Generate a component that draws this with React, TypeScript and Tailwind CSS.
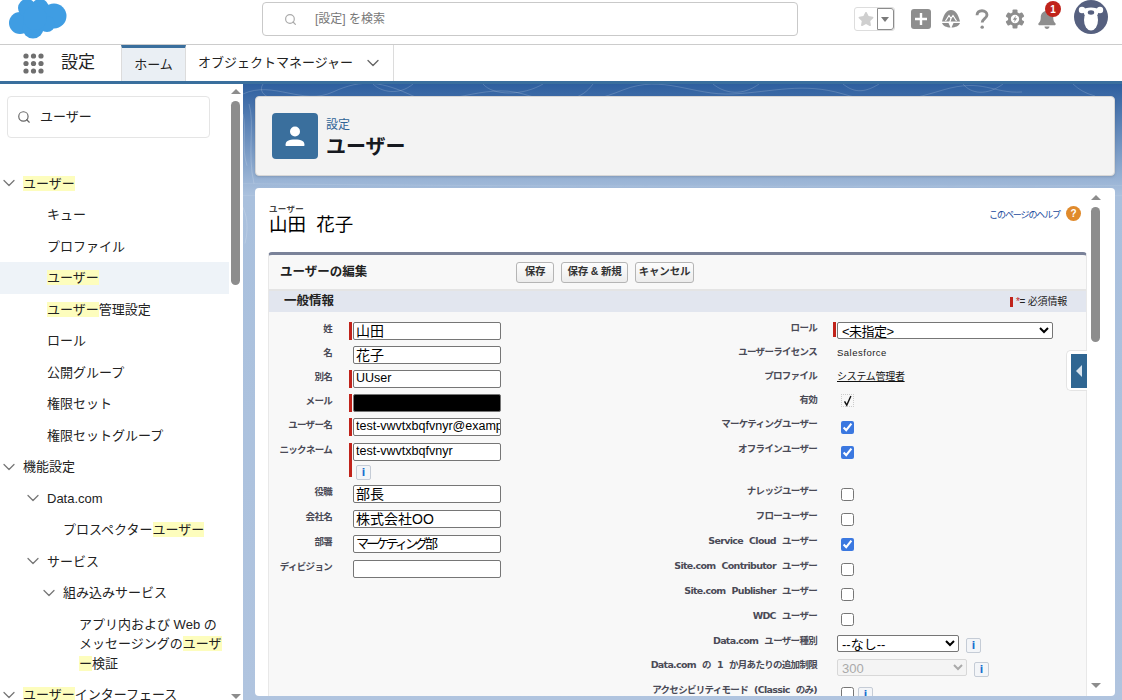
import { ChevronDown, Search } from "lucide-react"
import { FaBell, FaStar } from "react-icons/fa"

const jp = "font-['Liberation_Sans','Noto_Sans_CJK_JP',sans-serif]"

function Hl({ children }: { children: React.ReactNode }) {
  return <span className="bg-[#fdfdbd]">{children}</span>
}

function TreeRow({ indent, open, active, children }: { indent: string; open?: boolean; active?: boolean; children: React.ReactNode }) {
  return (
    <div className={"flex h-[31.5px] items-center text-[13px] text-[#222] " + indent + (active ? " bg-[#eef3f8]" : "")}>
      {open && <ChevronDown className="mr-[4px] ml-[-24px] h-[20px] w-[20px] text-[#777]" strokeWidth={1.5} />}
      <span>{children}</span>
    </div>
  )
}

function Sidebar() {
  return (
    <aside className="relative h-full w-[243px] shrink-0 overflow-hidden bg-white">
      <div className="w-[229px] pt-[12px] pl-[7px]">
        <div className="flex h-[42px] w-[203px] items-center gap-[9px] rounded border border-[#e5e5e5] pl-[9px] text-[13px] text-[#222]">
          <Search className="h-[14px] w-[14px] text-[#666]" strokeWidth={2} />
          ユーザー
        </div>
      </div>
      <nav className="mt-[29.5px] w-[229px]">
        <TreeRow indent="pl-[23px]" open><Hl>ユーザー</Hl></TreeRow>
        <TreeRow indent="pl-[47px]">キュー</TreeRow>
        <TreeRow indent="pl-[47px]">プロファイル</TreeRow>
        <TreeRow indent="pl-[47px]" active><Hl>ユーザー</Hl></TreeRow>
        <TreeRow indent="pl-[47px]"><Hl>ユーザー</Hl>管理設定</TreeRow>
        <TreeRow indent="pl-[47px]">ロール</TreeRow>
        <TreeRow indent="pl-[47px]">公開グループ</TreeRow>
        <TreeRow indent="pl-[47px]">権限セット</TreeRow>
        <TreeRow indent="pl-[47px]">権限セットグループ</TreeRow>
        <TreeRow indent="pl-[23px]" open>機能設定</TreeRow>
        <TreeRow indent="pl-[47px]" open>Data.com</TreeRow>
        <TreeRow indent="pl-[63px]"><span>プロスペクター</span><Hl>ユーザー</Hl></TreeRow>
        <TreeRow indent="pl-[47px]" open>サービス</TreeRow>
        <TreeRow indent="pl-[63px]" open>組み込みサービス</TreeRow>
        <div className="w-[229px] pt-[6px] pr-[4px] pl-[79px] text-[13px] leading-[19.5px] text-[#222]">
          アプリ内および Web の<br />メッセージングの<Hl>ユーザ</Hl><br /><Hl>ー</Hl>検証
        </div>
        <div className="mt-[6px]">
          <TreeRow indent="pl-[23px]" open><Hl>ユーザー</Hl>インターフェース</TreeRow>
        </div>
      </nav>
      {/* scrollbar */}
      <div className="absolute top-0 right-[2px] bottom-0 flex w-[11px] flex-col items-center">
        <div className="mt-[5px] h-0 w-0 border-x-[5px] border-b-[5px] border-x-transparent border-b-[#8d8d8d]" />
        <div className="mt-[7px] h-[184px] w-[9px] rounded-full bg-[#8d8d8d]" />
        <div className="mt-auto mb-[1px] h-0 w-0 border-x-[5px] border-t-[5px] border-x-transparent border-t-[#8d8d8d]" />
      </div>
    </aside>
  )
}

function Info({ className = "" }: { className?: string }) {
  return (
    <span className={"inline-flex h-[15px] w-[15px] items-center justify-center rounded-[2px] border border-[#c5ccd6] bg-[#f3f5f8] font-['DejaVu_Sans',sans-serif] text-[10px] leading-none font-bold text-[#1a6fd0] " + className}>
      i
    </span>
  )
}

function Field({ value, black, cls = "text-[12.5px]" }: { value?: string; black?: boolean; cls?: string }) {
  return (
    <input
      readOnly
      value={value ?? ""}
      className={"block h-[18px] w-[148px] rounded-[2px] border border-[#767676] pb-[3px] pl-[2px] leading-none text-black outline-none " + cls + (black ? " bg-black" : " bg-white")}
    />
  )
}

function Check({ on }: { on?: boolean }) {
  return <input type="checkbox" readOnly checked={!!on} className="ml-[4px] block h-[13px] w-[13px] accent-[#3b78e0]" />
}

type Row = { h: string; bar?: string; left?: string; field?: React.ReactNode; right?: string; val?: React.ReactNode; rbar?: boolean }

const rows: Row[] = [
  { h: "h-[24px]", bar: "h-[18px]", left: "姓", field: <Field value="山田" cls="text-[14px]" />, right: "ロール", rbar: true, val: (
    <select className="block h-[17px] w-[216px] rounded-[2px] border border-[#767676] bg-white text-[13px] leading-none tracking-[-0.5px] text-black">
      <option>&lt;未指定&gt;</option>
    </select>
  ) },
  { h: "h-[24px]", left: "名", field: <Field value="花子" cls="text-[14px]" />, right: "ユーザーライセンス", val: <span className="block text-[9.5px] leading-[14px] tracking-[0.5px] text-[#222]">Salesforce</span> },
  { h: "h-[24px]", bar: "h-[18px]", left: "別名", field: <Field value="UUser" />, right: "プロファイル", val: <span className="block text-[10px] leading-[14px] tracking-[-0.3px] text-[#111] underline">システム管理者</span> },
  { h: "h-[24px]", bar: "h-[18px]", left: "メール", field: <Field black />, right: "有効", val: (
    <span className="ml-[4px] flex h-[13px] w-[13px] items-center justify-center border border-dotted border-[#ccc]">
      <svg viewBox="0 0 13 14" className="h-[14px] w-[13px]"><path d="M3 7.5 L5.6 12 L10.5 1" fill="none" stroke="#111" strokeWidth="1.7" /></svg>
    </span>
  ) },
  { h: "h-[25px]", bar: "h-[18px]", left: "ユーザー名", field: <Field value="test-vwvtxbqfvnyr@example.com" />, right: "マーケティングユーザー", val: <div className="pt-[3px]"><Check on /></div> },
  { h: "h-[42px]", bar: "h-[34px]", left: "ニックネーム", field: (
    <>
      <Field value="test-vwvtxbqfvnyr" />
      <div className="flex pt-[4px] pl-[3px]"><Info /></div>
    </>
  ), right: "オフラインユーザー", val: <div className="pt-[3px]"><Check on /></div> },
  { h: "h-[25px]", left: "役職", field: <Field value="部長" cls="text-[14px]" />, right: "ナレッジユーザー", val: <div className="pt-[3px]"><Check /></div> },
  { h: "h-[25px]", left: "会社名", field: <Field value="株式会社OO" cls="text-[14px]" />, right: "フローユーザー", val: <div className="pt-[3px]"><Check /></div> },
  { h: "h-[25px]", left: "部署", field: <Field value="マーケティング部" cls="text-[13px] tracking-[-3px]" />, right: "Service Cloud ユーザー", val: <div className="pt-[3px]"><Check on /></div> },
  { h: "h-[25px]", left: "ディビジョン", field: <Field />, right: "Site.com Contributor ユーザー", val: <div className="pt-[3px]"><Check /></div> },
  { h: "h-[25px]", right: "Site.com Publisher ユーザー", val: <div className="pt-[3px]"><Check /></div> },
  { h: "h-[25px]", right: "WDC ユーザー", val: <div className="pt-[3px]"><Check /></div> },
  { h: "h-[24px]", right: "Data.com ユーザー種別", val: (
    <div className="flex items-start gap-[7px]">
      <select className="block h-[17px] w-[122px] rounded-[2px] border border-[#767676] bg-white text-[13px] leading-none text-black">
        <option>--なし--</option>
      </select>
      <Info className="mt-[3px]" />
    </div>
  ) },
  { h: "h-[25px]", right: "Data.com の 1 か月あたりの追加制限", val: (
    <div className="flex items-start gap-[7px]">
      <select disabled className="block h-[17px] w-[130px] rounded-[2px] border border-[#d8d8d8] bg-[#f4f4f4] text-[13px] leading-none text-[#aaa]">
        <option>300</option>
      </select>
      <Info className="mt-[3px]" />
    </div>
  ) },
  { h: "h-[25px]", right: "アクセシビリティモード (Classic のみ)", val: (
    <div className="flex items-start gap-[4px] pt-[3px]">
      <Check />
      <Info />
    </div>
  ) },
]

const labelCls = "flex justify-end text-[9.5px] leading-[14px] font-bold tracking-[-0.7px] [word-spacing:3.5px] whitespace-pre text-[#4a4a56] font-['DejaVu_Sans','Noto_Sans_CJK_JP',sans-serif]"

function FormRow({ row }: { row: Row }) {
  return (
    <div className={"flex " + row.h}>
      <div className={"w-[64px] pt-[2px] pr-[1px] " + labelCls}>{row.left}</div>
      <div className="flex w-[20px] justify-end pt-[2px] pr-[1px]">
        {row.bar && <div className={"w-[3px] bg-[#c0231b] " + row.bar} />}
      </div>
      <div className="w-[280px] pt-[2px]">{row.field}</div>
      <div className={"w-[184px] pt-[1px] " + labelCls}>{row.right}</div>
      <div className="flex w-[20px] justify-end pt-[2px] pr-[1px]">
        {row.rbar && <div className="h-[15px] w-[3px] bg-[#c0231b]" />}
      </div>
      <div className="pt-[2px]">{row.val}</div>
    </div>
  )
}

function Btn({ children, w }: { children: React.ReactNode; w: string }) {
  return (
    <div className={"flex h-[21px] items-center justify-center rounded-[3px] border border-[#b5b5b5] bg-[linear-gradient(#fdfdfd,#ececec)] text-[10.5px] font-bold tracking-[-0.2px] text-[#333] " + w}>
      {children}
    </div>
  )
}

function Contours() {
  return (
    <svg className="absolute inset-0 h-full w-full" viewBox="0 0 879 618" preserveAspectRatio="none" fill="none" stroke="#ffffff" strokeOpacity="0.22" strokeWidth="0.8">
      <path d="M0 10c30-14 60 12 90-2s50-10 80 4 70-14 110-2 60 12 100-4 70 6 110 4 70-12 110 0 60 8 100-4 50 4 79 2" />
      <path d="M20 0c-4 6 0 12 8 14M130 0c8 8 26 12 40 0M240 0c10 12 40 12 60 0M350 0c-6 8-12 12-20 14M470 0c12 10 30 12 46 0M600 0c10 8 20 10 36 0M720 0c8 10 24 12 40 0M830 0c6 6 14 10 22 12" />
      <path d="M0 30c4 16-2 34 4 52M6 20c6 20-2 50 5 80M-2 120c6 10 8 24 4 40" />
      <path d="M0 100c40 0 240 4 879 2M0 112c300-8 600 6 879 0" strokeOpacity="0.12" />
    </svg>
  )
}

function Header() {
  return (
    <header className="flex h-[45px] shrink-0 items-center border-b border-[#cccccc] bg-white pb-[6px]">
      <svg viewBox="0 0 58 39" className="ml-[9px] h-[39px] w-[58px] shrink-0" fill="#3f9de3">
        <circle cx="11" cy="23" r="11" />
        <circle cx="18" cy="8" r="9" />
        <circle cx="31" cy="8" r="9" />
        <circle cx="45" cy="16" r="12.5" />
        <circle cx="38" cy="24" r="8" />
        <circle cx="24" cy="28" r="10.5" />
        <circle cx="26" cy="18" r="12" />
      </svg>
      <div className="ml-[195px] flex h-[34px] w-[536px] shrink-0 items-center rounded border border-[#c9c9c9] text-[12px] text-[#777]">
        <Search className="ml-[21px] h-[13px] w-[13px] text-[#aaa]" strokeWidth={2.2} />
        <span className="ml-[18px]">[設定] を検索</span>
      </div>
      <div className="ml-[56px] flex h-[24px] w-[41px] rounded-[3px] border border-[#dddddd]">
        <div className="flex w-[23px] items-center justify-center">
          <FaStar className="h-[16px] w-[16px] text-[#cfcfcf]" />
        </div>
        <div className="flex w-[18px] items-center justify-center rounded-r-[3px] border border-[#8c8c8c]">
          <div className="h-0 w-0 border-x-[4px] border-t-[5px] border-x-transparent border-t-[#7a7a7a]" />
        </div>
      </div>
      <svg viewBox="0 0 20 20" className="ml-[16px] h-[20px] w-[20px]">
        <rect width="20" height="20" rx="3" fill="#8e8e8e" />
        <path d="M10 4v12M4 10h12" stroke="#fff" strokeWidth="2.4" />
      </svg>
      <svg viewBox="0 0 20 20" className="ml-[10px] h-[20px] w-[20px]" fill="#8e8e8e">
        <path d="M10 1C5.5 1 3 5 1 12.5h18C17 5 14.5 1 10 1Z" />
        <path d="M1 14h6.5l2 4.5C5.5 18.5 2 17 1 14ZM19 14h-6.5l-2 4.5C14.5 18.5 18 17 19 14Z" />
        <path d="M4.5 12 8 6.5l2 3 2-3 3.5 5.5M10 9.5 8.5 14" fill="none" stroke="#fff" strokeWidth="1.2" />
      </svg>
      <svg viewBox="0 0 14 22" className="ml-[14px] h-[21px] w-[14px]" fill="none" stroke="#8e8e8e" strokeWidth="3">
        <path d="M1.8 6.5C1.8 3.5 3.8 1.8 7 1.8s5.2 2 5.2 4.4c0 3.8-5 4-5 8" />
        <circle cx="7.2" cy="19" r="1.8" fill="#8e8e8e" stroke="none" />
      </svg>
      <svg viewBox="0 0 20 20" className="ml-[16px] h-[20px] w-[20px]" fill="#8e8e8e">
        {[0, 60, 120, 180, 240, 300].map((a) => (
          <rect key={a} x="7.5" y="0.5" width="5" height="5" rx="1" transform={"rotate(" + a + " 10 10)"} />
        ))}
        <circle cx="10" cy="10" r="7" />
        <circle cx="10" cy="10" r="4.2" fill="#fff" />
        <path d="M11 6.5 7.8 10.8h2L9 13.5l3.2-4.3h-2Z" />
      </svg>
      <div className="relative ml-[12px] h-[20px] w-[20px]">
        <FaBell className="h-[20px] w-[20px] text-[#8e8e8e]" />
        <span className="absolute top-[-8px] left-[8px] flex h-[16px] w-[16px] items-center justify-center rounded-full bg-[#c0231b] font-['Liberation_Sans',sans-serif] text-[10px] font-bold text-white">1</span>
      </div>
      <svg viewBox="0 0 34 34" className="mt-[-4px] ml-[17px] h-[34px] w-[34px]">
        <circle cx="17" cy="17" r="17" fill="#56607f" />
        <circle cx="8" cy="10" r="3.2" fill="#fff" />
        <circle cx="26" cy="10" r="3.2" fill="#fff" />
        <path d="M8 10c3-3.5 15-3.5 18 0-1 2-2 3-2.5 5l-13 0c-.5-2-1.5-3-2.5-5Z" fill="#fff" />
        <ellipse cx="17" cy="20" rx="7" ry="10.5" fill="#fff" />
        <ellipse cx="17" cy="12.5" rx="3.2" ry="2.2" fill="#56607f" />
      </svg>
    </header>
  )
}

function TabBar() {
  return (
    <div className="flex h-[36px] shrink-0 items-stretch bg-white text-[13px] text-[#222]">
      <svg viewBox="0 0 21 21" className="mt-[8px] ml-[23px] h-[21px] w-[21px]" fill="#6f6f6f">
        {[3, 10.5, 18].map((y) => [3, 10.5, 18].map((x) => <circle key={x + "-" + y} cx={x} cy={y} r="2.6" />))}
      </svg>
      <div className="ml-[17px] flex w-[60px] items-center text-[17px]">設定</div>
      <div className="flex w-[65px] items-center justify-center border-x border-t-[3px] border-x-[#dcdcdc] border-t-[#3a6f9d] bg-[#eaeff4]">ホーム</div>
      <div className="flex w-[208px] items-center border-r border-[#dcdcdc] pl-[12px]">
        オブジェクトマネージャー
        <ChevronDown className="ml-[10px] h-[20px] w-[20px] text-[#666]" strokeWidth={1.6} />
      </div>
    </div>
  )
}

function PageHeader() {
  return (
    <section className="flex h-[80px] items-center rounded border border-[#d6d6d6] bg-[#f3f3f3] pl-[16px] shadow-sm">
      <div className="flex h-[46px] w-[46px] items-center justify-center rounded bg-[#3a6f9d]">
        <svg viewBox="0 0 24 24" className="h-[24px] w-[24px]" fill="#fff">
          <circle cx="12" cy="7.5" r="5" />
          <path d="M2.5 21c0-1.5.5-3 2-4 2-1.2 4.5-1.5 7.5-1.5s5.5.3 7.5 1.5c1.5 1 2 2.5 2 4 0 .6-.4 1-1 1h-17c-.6 0-1-.4-1-1Z" />
        </svg>
      </div>
      <div className="ml-[8px] pt-[7px]">
        <div className="text-[12px] leading-[16px] text-[#2f6396]">設定</div>
        <div className="text-[20px] leading-[29px] font-bold text-[#16191f]">ユーザー</div>
      </div>
    </section>
  )
}

function EditForm() {
  return (
    <div className="mt-[16px] ml-[-1px] w-[819px] rounded-t-[4px] border-x border-t-[3px] border-x-[#e8e8e8] border-t-[#7a8299] bg-[#f8f8f8]">
      <div className="flex h-[36px] items-center border-b-[2px] border-[#e4e4e4]">
        <div className="w-[247px] pl-[11px] text-[12.5px] font-bold text-[#222]">ユーザーの編集</div>
        <div className="flex gap-[7px]">
          <Btn w="w-[38px]">保存</Btn>
          <Btn w="w-[67px]">保存 &amp; 新規</Btn>
          <Btn w="w-[59px]">キャンセル</Btn>
        </div>
      </div>
      <div className="flex h-[21px] items-center justify-between bg-[#e2e6ef] pr-[19px] pl-[15px]">
        <span className="text-[12.5px] font-bold text-[#222]">一般情報</span>
        <span className="flex items-center text-[10px] tracking-[-0.2px] text-[#222]">
          <span className="mr-[3px] h-[10px] w-[3px] bg-[#c0231b]" />
          <span className="text-[#c0231b]">*</span>= 必須情報
        </span>
      </div>
      <div className="pt-[8px]">
        {rows.map((row, i) => <FormRow key={i} row={row} />)}
      </div>
    </div>
  )
}

export default function App() {
  return (
    <div className={"flex h-[700px] w-[1122px] flex-col overflow-hidden bg-white " + jp}>
      <Header />
      <TabBar />
      <div className="h-[3px] shrink-0 bg-[#3a6f9d]" />
      <div className="flex min-h-0 flex-1">
        <Sidebar />
        <main className="relative min-w-0 flex-1 overflow-hidden bg-[linear-gradient(#2e5f9f,#a9c0dd_110px,#b0c4df)] pt-[12px] pr-[7px] pl-[12px]">
          <Contours />
          <div className="relative">
            <PageHeader />
            <section className="relative mt-[12px] h-[508px] overflow-hidden rounded bg-white pt-[17px] pl-[14px]">
              <div className="flex w-[818px] items-start justify-between">
                <div>
                  <div className="text-[8.5px] leading-[8px] font-bold tracking-[0.3px] text-[#444]">ユーザー</div>
                  <div className="text-[18.5px] leading-[23px] [word-spacing:5px] text-black">山田 花子</div>
                </div>
                <div className="mt-[-1px] flex items-center gap-[6px] pr-[6px]">
                  <span className="mt-[5px] text-[9px] tracking-[-1.1px] text-[#1a4a9c]">このページのヘルプ</span>
                  <span className="flex h-[15px] w-[15px] items-center justify-center rounded-full bg-[#e08a2c] text-[10px] font-bold text-white">?</span>
                </div>
              </div>
              <EditForm />
              {/* scrollbar */}
              <div className="absolute top-0 right-[14px] bottom-0 flex w-[11px] flex-col items-center">
                <div className="mt-[7px] h-0 w-0 border-x-[5px] border-b-[5px] border-x-transparent border-b-[#8d8d8d]" />
                <div className="mt-[7px] h-[135px] w-[9px] rounded-full bg-[#8d8d8d]" />
                <div className="mt-auto mb-[8px] h-0 w-0 border-x-[5px] border-t-[5px] border-x-transparent border-t-[#8d8d8d]" />
              </div>
              {/* collapse tab */}
              <div className="absolute top-[162px] left-[811px] flex h-[41px] w-[21px] items-center rounded-l-[5px] border border-r-0 border-[#e4e4e4] bg-white pl-[4px]">
                <div className="flex h-[34px] w-[16px] items-center justify-center bg-[#2f6692]">
                  <div className="h-0 w-0 border-y-[6px] border-r-[6px] border-y-transparent border-r-[#d8e4ee]" />
                </div>
              </div>
            </section>
          </div>
        </main>
      </div>
    </div>
  )
}
